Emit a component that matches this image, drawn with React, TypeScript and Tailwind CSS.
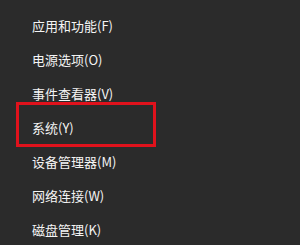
const items = [
  "应用和功能(F)",
  "电源选项(O)",
  "事件查看器(V)",
  "系统(Y)",
  "设备管理器(M)",
  "网络连接(W)",
  "磁盘管理(K)",
];

export default function App() {
  return (
    <div className="relative h-[245px] w-[300px] overflow-hidden bg-[#2b2b2b] py-2 font-['Noto_Sans_CJK_SC',sans-serif]">
      <ul>
        {items.map((label) => (
          <li
            key={label}
            className="flex h-[34px] items-center pl-8 text-[13px] leading-none text-[#f4f4f4]"
          >
            {label}
          </li>
        ))}
      </ul>
      {/* highlight box around 系统 */}
      <div className="absolute left-[16px] top-[102px] h-[45px] w-[140px] border-[3px] border-[#e0121c]" />
    </div>
  );
}
